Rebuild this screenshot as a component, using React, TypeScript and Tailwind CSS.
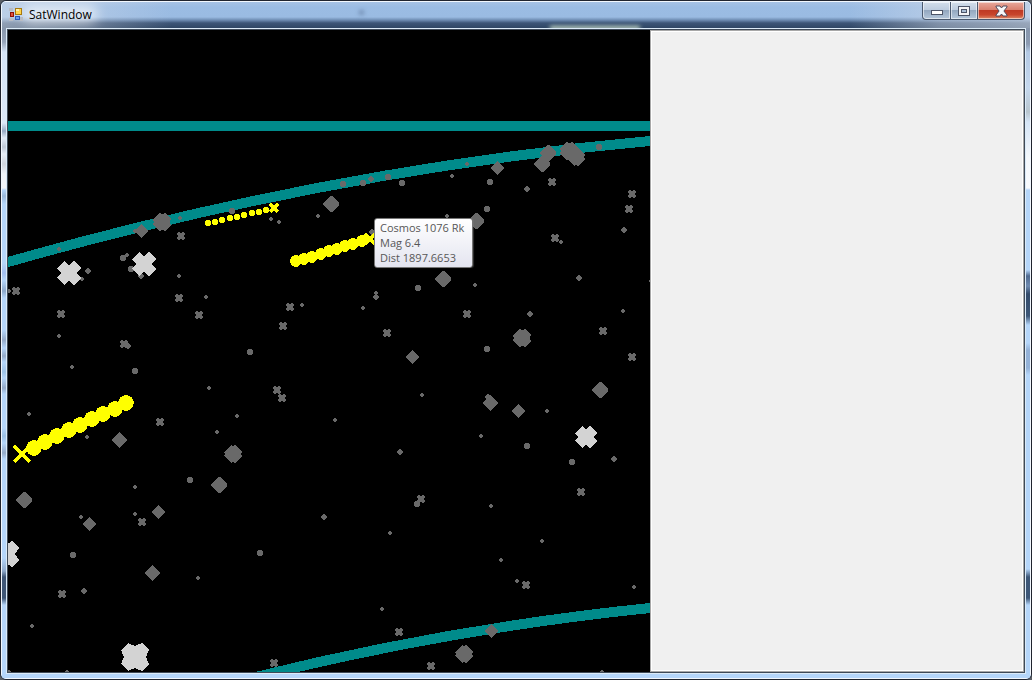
import { clsx } from "clsx";

type Point = [x: number, y: number];

// faint stars, drawn as small dots: x, y, radius
const dots: [number, number, number][] = [
  [59, 249, 2], [88, 271, 3], [82, 279, 2], [135, 231, 2], [180, 218, 2],
  [123, 258, 4], [127, 255, 2], [131, 269, 4], [141, 276, 3], [179, 276, 2],
  [206, 297, 2], [9, 291, 2], [271, 219, 2], [279, 222, 2], [318, 216, 2],
  [371, 179, 3], [372, 232, 3], [302, 305, 2], [418, 288, 4], [376, 293, 2],
  [376, 297, 3], [363, 308, 2], [467, 164, 2], [452, 176, 2], [527, 189, 3],
  [624, 230, 3], [561, 242, 2], [447, 216, 2], [475, 285, 2], [579, 278, 3],
  [651, 281, 2], [530, 314, 3], [623, 311, 2], [59, 336, 2], [128, 346, 3],
  [72, 367, 2], [209, 388, 2], [29, 414, 2], [217, 432, 2], [87, 437, 2],
  [190, 480, 4], [135, 487, 2], [250, 352, 4], [422, 395, 2], [237, 416, 2],
  [335, 420, 2], [400, 452, 3], [417, 504, 4], [488, 397, 3], [547, 411, 2],
  [481, 436, 2], [614, 459, 3], [572, 462, 4], [491, 506, 2], [81, 517, 2],
  [135, 514, 2], [198, 578, 2], [84, 591, 3], [32, 626, 2], [9, 672, 2],
  [67, 672, 2], [324, 517, 3], [390, 533, 2], [382, 609, 2], [501, 560, 2],
  [517, 581, 2], [542, 541, 2], [634, 587, 2], [602, 672, 2],
  [232, 211, 4], [343, 184, 4], [363, 183, 4], [388, 177, 4], [402, 183, 4],
  [490, 182, 4], [599, 147, 4], [487, 209, 4], [135, 371, 4], [487, 349, 4],
  [527, 446, 4], [73, 555, 4], [260, 553, 4],
];

// small stars, drawn as notched squares: x, y, reach
const squares: [number, number, number][] = [
  [181, 236, 4], [179, 298, 4], [199, 315, 4], [61, 314, 4], [16, 291, 4],
  [290, 307, 4], [283, 326, 4], [552, 182, 4], [632, 194, 4], [629, 209, 4],
  [555, 238, 4], [467, 314, 4], [124, 344, 4], [160, 422, 4], [387, 333, 4],
  [277, 390, 4], [282, 398, 4], [421, 499, 4], [603, 331, 4], [632, 357, 4],
  [581, 492, 4], [142, 522, 4], [62, 594, 4], [399, 632, 4], [274, 663, 4],
  [431, 666, 4], [526, 585, 4],
];

// larger stars: x, y, reach, lobe offset, notch
const crosses: [number, number, number, number, number][] = [
  [141, 231, 7, 0, 7], [497, 168, 7, 0, 7], [412, 357, 7, 0, 7],
  [119, 440, 8, 0, 8], [490, 403, 8, 0, 8], [518, 411, 7, 0, 7],
  [89, 524, 7, 0, 7], [158, 512, 7, 0, 7], [152, 573, 8, 0, 8],
  [491, 631, 7, 0, 7],
  [331, 204, 8, 1, 8], [548, 153, 8, 1, 8], [542, 164, 8, 1, 8],
  [476, 221, 8, 1, 8], [443, 279, 8, 1, 8], [24, 500, 8, 1, 8],
  [219, 485, 8, 1, 8], [600, 390, 8, 1, 8],
  [162, 222, 9, 3, 8], [569, 151, 9, 3, 8], [576, 157, 9, 2, 8],
  [233, 454, 9, 2, 8], [522, 338, 9, 3, 8], [464, 654, 9, 2, 8],
];

const brightStars: [number, number, number, number, number][] = [
  [69, 273, 12, 5, 8],
  [144, 264, 12, 5, 8],
  [586, 437, 11, 4, 8],
  [6, 554, 13, 6, 9],
  [135, 657, 14, 7, 11],
];

const satellites: { trail: Point[]; radius: number; head: Point; arm: number }[] = [
  {
    trail: [[208, 223], [215, 222], [222, 220], [230, 218], [237, 217], [244, 215], [252, 213], [259, 212], [266, 210]],
    radius: 3.3,
    head: [274, 208],
    arm: 4,
  },
  {
    trail: [[296, 261], [304, 259], [312, 257], [321, 254], [329, 251], [337, 249], [345, 246], [353, 244], [362, 241]],
    radius: 5.8,
    head: [370, 239],
    arm: 5,
  },
  {
    trail: [[126, 403], [115, 409], [103, 414], [92, 419], [80, 425], [69, 430], [57, 436], [45, 442], [34, 448]],
    radius: 7.8,
    head: [22, 454],
    arm: 8,
  },
];

function dotPath(x: number, y: number, r: number) {
  if (r === 2) return `M${x - 2} ${y - 1}h1v-1h2v1h1v2h-1v1h-2v-1h-1z`;
  if (r === 3) return `M${x - 3} ${y - 1}h1v-1h1v-1h2v1h1v1h1v2h-1v1h-1v1h-2v-1h-1v-1h-1z`;
  return `M${x - 2} ${y - 3}h4v1h1v4h-1v1h-4v-1h-1v-4h1z`;
}

// the middle is filled so that only the edges stay notched
function squarePath(x: number, y: number, a: number) {
  const w = a - 2;
  return `M${x - a + 1} ${y - a}h${w}v1h2v-1h${w}v1h1v${w}h-1v2h1v${w}h-1v1h-${w}v-1h-2v1h-${w}v-1h-1v-${w}h1v-2h-1v-${w}h1z`;
}

function crossPoints(x: number, y: number, a: number, b: number, n: number) {
  return [
    [-b, -a], [0, -n], [b, -a], [a, -b], [n, 0], [a, b],
    [b, a], [0, n], [-b, a], [-a, b], [-n, 0], [-a, -b],
  ]
    .map(([dx, dy]) => `${x + dx},${y + dy}`)
    .join(" ");
}

function SkyMap() {
  return (
    <svg
      viewBox="8 30 642 642"
      preserveAspectRatio="xMidYMid slice"
      shapeRendering="crispEdges"
      className="block h-full w-full bg-black"
      role="img"
      aria-label="Sky map"
    >
      <g fill="none" stroke="#008b8b" strokeWidth="10">
        <path d="M0 126H660" />
        <path d="M0 264L8 262C222 201 436 160 650 141L660 140" />
        <path d="M240 681C377 646 513 622 650 608L660 607" />
      </g>
      <g fill="#696969">
        {dots.map(([x, y, r], i) => (
          <path key={i} d={dotPath(x, y, r)} />
        ))}
        {squares.map(([x, y, a], i) => (
          <path key={i} d={squarePath(x, y, a)} />
        ))}
        {crosses.map(([x, y, a, b, n], i) => (
          <polygon key={i} points={crossPoints(x, y, a, b, n)} />
        ))}
      </g>
      <g fill="#d3d3d3">
        {brightStars.map(([x, y, a, b, n], i) => (
          <polygon key={i} points={crossPoints(x, y, a, b, n)} />
        ))}
      </g>
      {satellites.map(({ trail, radius, head: [x, y], arm }, i) => (
        <g key={i} fill="#ffff00">
          {trail.map(([cx, cy], j) => (
            <circle key={j} cx={cx} cy={cy} r={radius} />
          ))}
          <path
            d={`M${x - arm} ${y - arm}L${x + arm} ${y + arm}M${x - arm} ${y + arm}L${x + arm} ${y - arm}`}
            stroke="#ffff00"
            strokeWidth="3"
          />
        </g>
      ))}
    </svg>
  );
}

function AppIcon() {
  return (
    <svg width="14" height="14" viewBox="0 0 14 14" shapeRendering="crispEdges" aria-hidden="true">
      <path d="M0 0h4v3H0zM0 10h4v3H0zM11 9h3v4h-3z" fill="#b9bcc4" />
      <rect x="1" y="4" width="4" height="5" fill="#8e1208" />
      <rect x="2" y="5" width="2" height="3" fill="#e0523c" />
      <rect x="6" y="0" width="7" height="7" fill="#a87a10" />
      <rect x="7" y="1" width="5" height="5" fill="#ffd44a" />
      <rect x="7" y="1" width="3" height="2" fill="#fff0a8" />
      <rect x="6" y="8" width="5" height="4" fill="#2858b8" />
      <rect x="7" y="9" width="3" height="2" fill="#6aa0f0" />
    </svg>
  );
}

function CaptionButtons() {
  const base =
    "flex h-[18px] items-center justify-center border-r border-b border-[#4b5a70] shadow-[inset_0_0_0_1px_rgba(255,255,255,0.55)]";
  const glass =
    "bg-[linear-gradient(to_bottom,#d3deeb_0%,#bccbde_48%,#94a8c0_50%,#b4c6da_100%)]";
  return (
    <div className="flex self-start">
      <button aria-label="Minimize" className={clsx(base, glass, "w-[29px] rounded-bl border-l")}>
        <svg width="13" height="12" viewBox="0 0 13 12" shapeRendering="crispEdges">
          <rect x="1" y="5" width="12" height="5" fill="#4d5568" />
          <rect x="2" y="6" width="10" height="3" fill="#fff" />
        </svg>
      </button>
      <button aria-label="Maximize" className={clsx(base, glass, "w-[27px]")}>
        <svg width="12" height="10" viewBox="0 0 12 10" shapeRendering="crispEdges">
          <rect width="12" height="10" fill="#4d5568" />
          <rect x="1" y="1" width="10" height="8" fill="#f4f4f6" />
          <rect x="3" y="3" width="6" height="4" fill="#4d5568" />
          <rect x="4" y="4" width="4" height="2" fill="#a9bdd5" />
        </svg>
      </button>
      <button
        aria-label="Close"
        className={clsx(
          base,
          "w-[47px] rounded-br bg-[linear-gradient(to_bottom,#e8a99d_0%,#d9806f_45%,#bf3a24_50%,#c8452c_75%,#dd8a68_100%)]",
        )}
      >
        <svg width="13" height="12" viewBox="0 0 13 12">
          <path d="M1 1h4l1.500 2L8 1h4v1L8.900 6 12 10v1H8L6.500 9 5 11H1v-1L4.100 6 1 2z" fill="#f6f6f8" stroke="#51485a" />
        </svg>
      </button>
    </div>
  );
}

function TitleBar() {
  return (
    <header className="relative flex h-[26px] items-center overflow-hidden rounded-t bg-[linear-gradient(to_bottom,#a6c2e4_0px,#9bbce3_5px,#9abbe2_15px,#6f8db3_18px,#3c5577_21px,#2f4664_26px)] pr-[5px] pl-[7px]">
      {/* frosted highlights over both ends of the glass */}
      <div className="absolute inset-y-0 left-0 w-[170px] bg-[linear-gradient(to_right,rgba(214,222,234,0.55)_0%,rgba(214,222,234,0.4)_40%,transparent_100%)]" />
      <div className="absolute inset-y-0 right-0 w-[180px] bg-[linear-gradient(to_left,rgba(214,222,234,0.6)_0%,rgba(214,222,234,0.45)_50%,transparent_100%)]" />
      <div className="absolute top-[3px] left-[20px] h-[18px] w-[76px] rounded-full bg-white/60 blur-[6px]" />
      <div className="absolute top-[24px] right-[390px] h-[4px] w-[90px] bg-[#c5dac8] blur-[2px]" />
      <div className="absolute top-[8px] left-[357px] h-[5px] w-[5px] rounded-full bg-[#6d88ad] blur-[2px]" />
      <div className="relative flex flex-1 items-center gap-[6px]">
        <AppIcon />
        <h1 className="text-[12px] leading-4 text-black">SatWindow</h1>
      </div>
      <div className="relative self-start">
        <CaptionButtons />
      </div>
    </header>
  );
}

function SatelliteTooltip() {
  return (
    <div
      role="tooltip"
      className="absolute top-[188px] left-[366px] rounded-[3px] border border-[#767676] bg-linear-to-b from-white to-[#e4e5f0] pt-px pr-2 pb-[2px] pl-[5px] text-[11px] leading-[15px] whitespace-nowrap text-[#575757] shadow-[1px_0_1px_rgba(120,120,120,0.4)]"
    >
      <p>Cosmos 1076 Rk</p>
      <p>Mag 6.4</p>
      <p>Dist 1897.6653</p>
    </div>
  );
}

export default function App() {
  return (
    <div className="h-screen overflow-hidden bg-[#5b5f66] font-['Open_Sans','Noto_Sans',sans-serif]">
      <div className="flex h-full flex-col overflow-hidden rounded-md border border-[#20242e] bg-[#b9d8fb]">
        <div className="flex min-h-0 flex-1 flex-col rounded-[5px] border border-[#f2f7fd]">
          <TitleBar />
          <div className="flex min-h-0 flex-1">
            <div className="w-1 bg-[linear-gradient(to_bottom,#8796ac_0px,#96a5ba_14px,#d5e4f6_24px,#dbe8f7_95px,#98aac3_103px,#e2ebf6_110px,#bec8d6_119px,#e6edf6_126px,#d0d6df_136px,#eef3f9_146px,#f2f5f9_160px,#b5d6fa_162px,#9ab8d9_168px,#b5d6fa_176px,#b5d6fa_235px,#a3bff0_245px,#b5d6fa_252px,#8ca8ca_263px,#b5d6fa_270px,#b5d6fa_302px,#94aac8_312px,#b5d6fa_320px,#94aac8_328px,#b5d6fa_334px,#9fc4e8_344px,#b5d6fa_350px,#94aac8_360px,#b5d6fa_366px,#b5d6fa_400px,#9bc0e4_408px,#b5d6fa_415px,#94aac8_425px,#b5d6fa_431px,#b5d6fa_530px,#8ea9ca_543px,#3e5676_549px,#3e5676_570px,#b5d6fa_577px)]" />
            <main className="flex min-w-0 flex-1 border border-[#dcebf8]">
              <div className="grid min-w-0 flex-1 grid-cols-[642fr_374fr] border border-[#3e4a58] bg-black">
                <section className="relative min-h-0 min-w-0 overflow-hidden">
                  <SkyMap />
                  <SatelliteTooltip />
                </section>
                <aside className="border border-[#a8a8a8] bg-[#f0f0f0] shadow-[inset_0_0_0_1px_#ffffff]" />
              </div>
            </main>
            <div className="w-1 bg-[linear-gradient(to_bottom,#8796ac_0px,#8c9bb2_16px,#b3c9e4_24px,#c5d8ee_60px,#b9c6cf_84px,#d5e5f7_94px,#f4f8fc_130px,#f8fafd_160px,#b5d6fa_162px,#b5d6fa_242px,#4f6a90_248px,#6f8bb1_258px,#344c6c_266px,#3d5778_288px,#b5d6fa_297px,#b5d6fa_315px,#94b2d8_322px,#94b2d8_340px,#b5d6fa_347px,#b5d6fa_541px,#3d5778_549px,#3d5778_570px,#b5d6fa_577px)]" />
          </div>
          <div className="h-1 bg-[#b5d6fa]" />
        </div>
      </div>
    </div>
  );
}
